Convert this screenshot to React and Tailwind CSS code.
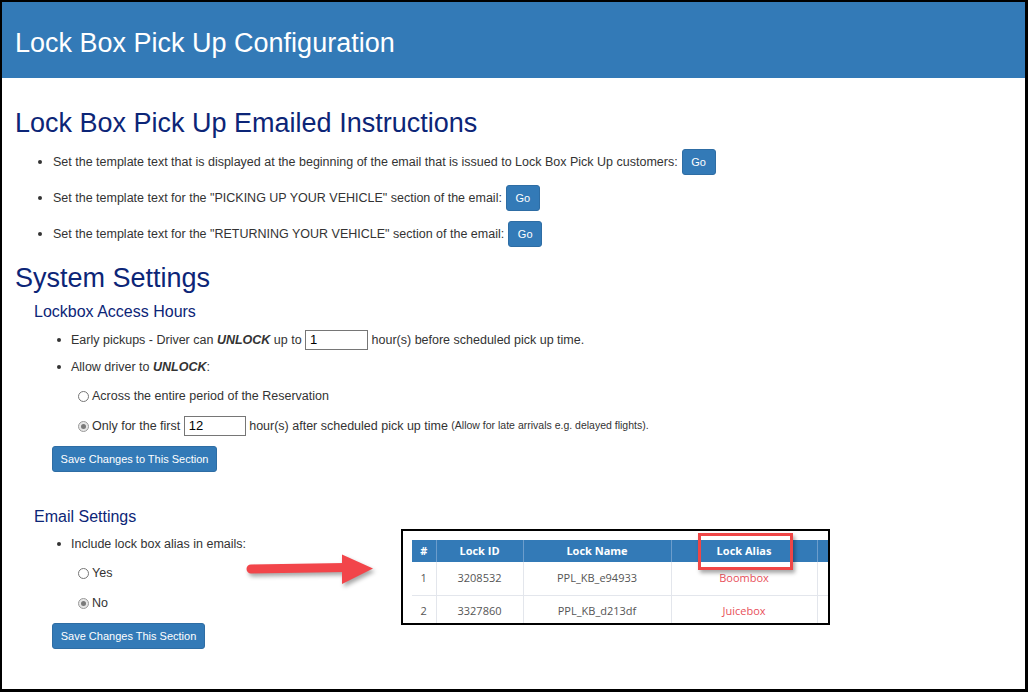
import React from 'react';

// Lock Box Pick Up configuration page, with the pasted table snippet
const BLUE = 'bg-[#337ab7]';

function Bullet() {
  return <span className="w-[4px] h-[4px] rounded-full bg-[#333] shrink-0" />;
}

function GoButton() {
  return (
    <button className="ml-[4px] w-[34px] h-[26px] rounded-[3px] bg-[#337ab7] border border-[#2e6da4] text-white text-[11px] leading-none">
      Go
    </button>
  );
}

function Radio({ checked }) {
  if (checked) {
    return (
      <span className="mr-[3px] w-[11px] h-[11px] rounded-full border border-[#9a9a9a] bg-[#e6e6e6] flex items-center justify-center shrink-0">
        <span className="w-[5px] h-[5px] rounded-full bg-[#7a7a7a]" />
      </span>
    );
  }
  return <span className="mr-[3px] w-[11px] h-[11px] rounded-full border border-[#767676] bg-white shrink-0" />;
}

function TextBox({ value, width }) {
  return (
    <span className={`${width} h-[20px] border border-[#767676] bg-white flex items-center pl-[4px] text-[13px] text-black`}>
      {value}
    </span>
  );
}

function SaveButton({ children, width }) {
  return (
    <button className={`${width} h-[26px] rounded-[3px] bg-[#337ab7] border border-[#2e6da4] text-white text-[11px] leading-none`}>
      {children}
    </button>
  );
}

function Arrow() {
  return (
    <svg width="132" height="38" viewBox="0 0 132 38" className="drop-shadow-[2px_3px_2px_rgba(0,0,0,0.35)]">
      <line x1="6" y1="18" x2="100" y2="16.5" stroke="#f2454a" strokeWidth="9" strokeLinecap="round" />
      <polygon points="97,3.5 128,17.5 97,33" fill="#f2454a" />
    </svg>
  );
}

function LockTable() {
  const rows = [
    { n: '1', id: '3208532', name: 'PPL_KB_e94933', alias: 'Boombox' },
    { n: '2', id: '3327860', name: 'PPL_KB_d213df', alias: 'Juicebox' },
  ];
  return (
    <div className="relative w-[429px] h-[96px] border-2 border-black bg-white overflow-hidden font-['Open_Sans',sans-serif]">
      <div className="pl-[9px] pt-[9px]">
        <table className="border-collapse text-[11px] w-[440px] table-fixed">
          <colgroup>
            <col className="w-[24px]" />
            <col className="w-[87px]" />
            <col className="w-[148px]" />
            <col className="w-[146px]" />
            <col className="w-[35px]" />
          </colgroup>
          <thead>
            <tr className={`${BLUE} h-[22px] text-white font-bold`}>
              <th className="border-r border-[#6c9dcc]">#</th>
              <th className="border-r border-[#6c9dcc]">Lock ID</th>
              <th className="border-r border-[#6c9dcc]">Lock Name</th>
              <th className="border-r border-[#6c9dcc]">Lock Alias</th>
              <th></th>
            </tr>
          </thead>
          <tbody className="text-[#555]">
            {rows.map((r) => (
              <tr key={r.n} className="h-[33px] border-b border-[#e3e6ec]">
                <td className="border-r border-[#e3e6ec] text-center">{r.n}</td>
                <td className="border-r border-[#e3e6ec] text-center">{r.id}</td>
                <td className="border-r border-[#e3e6ec] text-center">{r.name}</td>
                <td className="border-r border-[#e3e6ec] text-center text-[#e8505a]">{r.alias}</td>
                <td></td>
              </tr>
            ))}
          </tbody>
        </table>
      </div>
      {/* red highlight around the alias column header */}
      <div className="absolute left-[295px] top-[2px] w-[95px] h-[37px] border-[3px] border-[#f04646] shadow-[2px_3px_4px_rgba(0,0,0,0.35)]" />
    </div>
  );
}

export default function App() {
  return (
    <div className="w-[1028px] h-[692px] overflow-hidden bg-white border-black border-t-2 border-l-2 border-r-[3px] border-b-[3px] font-['Liberation_Sans',Arial,sans-serif] text-[#333] text-[12.5px]">
      <header className={`${BLUE} h-[76px] pl-[13px] pt-[28px]`}>
        <h1 className="text-white text-[27px] leading-[27px]">Lock Box Pick Up Configuration</h1>
      </header>

      <h2 className="ml-[13px] mt-[32px] text-[#0c2577] text-[27px] leading-[27px]">Lock Box Pick Up Emailed Instructions</h2>

      <div className="mt-[12px] flex flex-col gap-[10px] pl-[36px]">
        <div className="h-[26px] flex items-center">
          <Bullet />
          <span className="ml-[11px]">Set the template text that is displayed at the beginning of the email that is issued to Lock Box Pick Up customers:</span>
          <GoButton />
        </div>
        <div className="h-[26px] flex items-center">
          <Bullet />
          <span className="ml-[11px]">Set the template text for the "PICKING UP YOUR VEHICLE" section of the email:</span>
          <GoButton />
        </div>
        <div className="h-[26px] flex items-center">
          <Bullet />
          <span className="ml-[11px]">Set the template text for the "RETURNING YOUR VEHICLE" section of the email:</span>
          <GoButton />
        </div>
      </div>

      <h2 className="ml-[13px] mt-[18px] text-[#0c2577] text-[27px] leading-[27px]">System Settings</h2>
      <h3 className="ml-[32px] mt-[12px] text-[#0c2577] text-[16px] leading-[16px]">Lockbox Access Hours</h3>

      <div className="mt-[10px] pl-[55px] flex flex-col">
        <div className="h-[20px] flex items-center">
          <Bullet />
          <span className="ml-[10px] whitespace-pre">Early pickups - Driver can <b><i>UNLOCK</i></b> up to </span>
          <TextBox value="1" width="w-[63px]" />
          <span className="whitespace-pre"> hour(s) before scheduled pick up time.</span>
        </div>
        <div className="h-[20px] mt-[7px] flex items-center">
          <Bullet />
          <span className="ml-[10px]">Allow driver to <b><i>UNLOCK</i></b>:</span>
        </div>
      </div>

      <div className="pl-[76px] flex flex-col">
        <label className="h-[20px] mt-[9px] flex items-center">
          <Radio />
          <span>Across the entire period of the Reservation</span>
        </label>
        <label className="h-[20px] mt-[10px] flex items-center">
          <Radio checked />
          <span className="whitespace-pre">Only for the first </span>
          <TextBox value="12" width="w-[62px]" />
          <span className="whitespace-pre"> hour(s) after scheduled pick up time </span>
          <span className="text-[10.5px]">(Allow for late arrivals e.g. delayed flights).</span>
        </label>
      </div>

      <div className="pl-[50px] mt-[10px]">
        <SaveButton width="w-[165px]">Save Changes to This Section</SaveButton>
      </div>

      <section className="mt-[37px] flex">
        <div className="w-[243px] shrink-0">
          <h3 className="ml-[32px] text-[#0c2577] text-[16px] leading-[16px]">Email Settings</h3>
          <div className="mt-[9px] pl-[55px] h-[20px] flex items-center">
            <Bullet />
            <span className="ml-[10px] whitespace-nowrap">Include lock box alias in emails:</span>
          </div>
          <div className="pl-[76px] flex flex-col">
            <label className="h-[20px] mt-[9px] flex items-center">
              <Radio />
              <span>Yes</span>
            </label>
            <label className="h-[20px] mt-[10px] flex items-center">
              <Radio checked />
              <span>No</span>
            </label>
          </div>
          <div className="pl-[50px] mt-[10px]">
            <SaveButton width="w-[153px]">Save Changes This Section</SaveButton>
          </div>
        </div>
        <div className="mt-[42px] shrink-0">
          <Arrow />
        </div>
        <div className="ml-[24px] mt-[20px] shrink-0">
          <LockTable />
        </div>
      </section>
    </div>
  );
}
